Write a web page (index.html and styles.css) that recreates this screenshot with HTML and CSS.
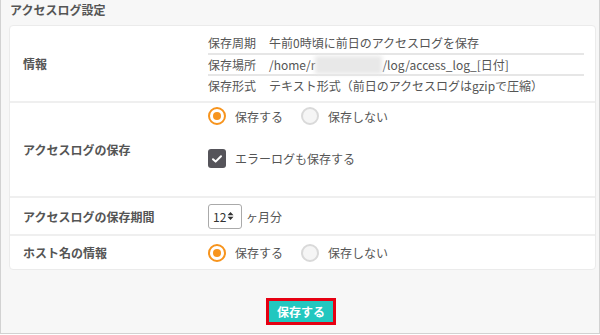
FILE: index.html
```html
<!DOCTYPE html>
<html lang="ja">
<head>
<meta charset="utf-8">
<link rel="stylesheet" href="styles.css">
</head>
<body>
<div class="frame">
  <h1 class="title">アクセスログ設定</h1>
  <div class="card">
    <div class="row row-info">
      <div class="label">情報</div>
      <div class="value">
        <div class="info-list">
          <div class="info-item"><span class="ik">保存周期</span><span class="iv">午前0時頃に前日のアクセスログを保存</span></div>
          <div class="info-item"><span class="ik">保存場所</span><span class="iv">/home/r<span class="blur"></span>/log/access_log_[日付]</span></div>
          <div class="info-item"><span class="ik">保存形式</span><span class="iv">テキスト形式（前日のアクセスログはgzipで圧縮）</span></div>
        </div>
      </div>
    </div>
    <div class="row row-save">
      <div class="label">アクセスログの保存</div>
      <div class="value stack">
        <div class="radios">
          <label class="radio"><span class="rb on"></span>保存する</label>
          <label class="radio"><span class="rb"></span>保存しない</label>
        </div>
        <label class="check"><span class="cb"><svg width="12" height="10" viewBox="0 0 12 10"><path d="M2 5.2 L4.6 7.6 L10 2.2" fill="none" stroke="#fff" stroke-width="2" stroke-linecap="round" stroke-linejoin="round"/></svg></span>エラーログも保存する</label>
      </div>
    </div>
    <div class="row row-period">
      <div class="label">アクセスログの保存期間</div>
      <div class="value inline">
        <span class="select">12<svg width="7" height="10" viewBox="0 0 7 10"><path d="M3.5 1 L6.5 4.2 L0.5 4.2 Z M3.5 9 L6.5 5.8 L0.5 5.8 Z" fill="#333"/></svg></span>
        <span class="unit">ヶ月分</span>
      </div>
    </div>
    <div class="row row-host">
      <div class="label">ホスト名の情報</div>
      <div class="value">
        <div class="radios">
          <label class="radio"><span class="rb on"></span>保存する</label>
          <label class="radio"><span class="rb"></span>保存しない</label>
        </div>
      </div>
    </div>
  </div>
  <div class="actions">
    <span class="btn-wrap"><button class="btn">保存する</button></span>
  </div>
</div>
</body>
</html>
```
FILE: styles.css
```css
* { box-sizing: border-box; }
html, body { margin: 0; padding: 0; }
body {
  width: 600px;
  height: 335px;
  background: #fff;
  font-family: "Noto Sans CJK JP", "Noto Sans", sans-serif;
  color: #555;
  font-size: 12px;
}
.frame {
  width: 600px;
  height: 334px;
  background: #f7f7f7;
  border: 1px solid #d2d2d2;
  border-top: none;
  padding: 1px 4px 0 8px;
}
.title {
  margin: 0;
  font-size: 12px;
  font-weight: bold;
  color: #555;
  height: 24px;
  line-height: 18px;
  padding-left: 1px;
}
.card {
  background: #fff;
  border: 1px solid #ebebeb;
  border-radius: 4px;
  width: 587px;
}
.row {
  display: flex;
  border-top: 2px solid #efefef;
}
.row:first-child { border-top: none; }
.label {
  width: 198px;
  padding-left: 13px;
  display: flex;
  align-items: center;
  font-weight: bold;
  color: #555;
}
.value { flex: 1; }
.row-info { height: 75px; }
.row-info .value { padding: 7px 11px 0 0; }
.info-item {
  height: 21px;
  line-height: 20px;
  display: flex;
  border-top: 2px solid #e6e6e6;
  color: #555;
}
.info-item:first-child { border-top: none; height: 20px; }
.ik { width: 61px; }
.iv { position: relative; }
.blur {
  display: inline-block;
  width: 67px;
  height: 18px;
  vertical-align: -4px;
  background: #e8e8e8;
  filter: blur(2px);
}
.row-save { height: 95px; }
.stack { padding-top: 3px; }
.radios { display: flex; align-items: center; gap: 0; }
.radio {
  display: flex;
  align-items: center;
  height: 20px;
  margin-right: 18px;
  color: #555;
}
.rb {
  width: 18px;
  height: 18px;
  border-radius: 50%;
  border: 2px solid #d9d9d9;
  background: #f5f5f5;
  margin-right: 9px;
  position: relative;
}
.rb.on {
  border-color: #f7941d;
  background: #fff;
}
.rb.on::after {
  content: "";
  position: absolute;
  left: 3px; top: 3px;
  width: 8px; height: 8px;
  border-radius: 50%;
  background: #f7941d;
}
.check {
  display: flex;
  align-items: center;
  margin-top: 23px;
  color: #555;
}
.cb {
  width: 18px;
  height: 19px;
  border-radius: 3px;
  background: #55545a;
  margin-right: 9px;
  display: flex;
  align-items: center;
  justify-content: center;
}
.row-period { height: 38px; }
.inline { display: flex; align-items: center; }
.select {
  display: inline-flex;
  align-items: center;
  width: 34px;
  height: 25px;
  border: 1px solid #aaa;
  border-radius: 3px;
  padding-left: 4px;
  color: #333;
  font-size: 12px;
  gap: 1px;
}
.unit { margin-left: 4px; color: #555; }
.row-host { height: 35px; }
.row-host .value { display: flex; align-items: center; }
.actions {
  display: flex;
  justify-content: center;
  padding-top: 28px;
  padding-right: 2px;
}
.btn-wrap {
  display: inline-block;
  border: 3px solid #e60012;
}
.btn {
  display: block;
  width: 64px;
  height: 21px;
  border: none;
  background: #22c7bf;
  color: #fff;
  font-family: "Noto Sans CJK JP", sans-serif;
  font-weight: bold;
  font-size: 12px;
  padding: 0;
}
```
